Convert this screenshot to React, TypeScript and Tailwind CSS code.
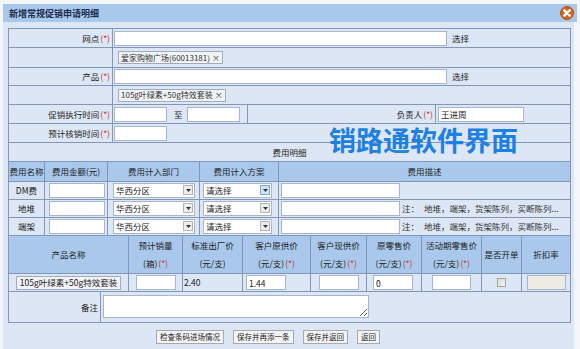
import React from 'react'

// shared cell border
const cell = 'border border-[#8296ba] p-0'
const head = 'border border-[#8296ba] p-0 bg-[#a9c8ec] font-normal'

function Req() {
  return <span className="text-[#c8342c] ml-[1px]">(*)</span>
}

function Box({ w, value = '', disabled = false }: { w: string; value?: string; disabled?: boolean }) {
  return (
    <input
      readOnly
      value={value}
      className={`${w} h-[15px] border border-[#a7b6cd] px-[2px] text-[8.5px] outline-none ${disabled ? 'bg-[#ecebe4]' : 'bg-white'}`}
    />
  )
}

function Tag({ text }: { text: string }) {
  return (
    <span className="inline-flex items-center h-[13px] px-[2px] border border-[#9eabc0] bg-[#f1f3f6] text-[#333] text-[8px]">
      {text}
      <span className="ml-[2px]">×</span>
    </span>
  )
}

function Select({ w, value, hot = false }: { w: string; value: string; hot?: boolean }) {
  return (
    <div className={`${w} h-[15px] flex items-center justify-between bg-white border border-[#a7b6cd] pl-[2px] pr-[1px]`}>
      <span>{value}</span>
      <span
        className={`w-[10px] h-[10px] flex items-center justify-center border ${
          hot ? 'border-[#7fa6d6] bg-[#cfe3f8]' : 'border-[#b5b5b5] bg-[#ededed]'
        }`}
      >
        <svg width="5" height="3" viewBox="0 0 5 3">
          <path d="M0 0h5L2.5 3z" fill="#333" />
        </svg>
      </span>
    </div>
  )
}

function Btn({ label }: { label: string }) {
  return (
    <button
      type="button"
      className="h-[14px] px-[3px] border border-[#a4a9b3] bg-[#f4f4f4] text-[7.5px] text-[#222] leading-none"
    >
      {label}
    </button>
  )
}

const costRows = [
  { name: 'DM费', hot: true, note: false },
  { name: '地堆', hot: false, note: true },
  { name: '端架', hot: false, note: true },
]

const productHeads: [string, string | null, boolean][] = [
  ['产品名称', null, false],
  ['预计销量', '(箱)', true],
  ['标准出厂价', '(元/支)', false],
  ['客户原供价', '(元/支)', true],
  ['客户现供价', '(元/支)', true],
  ['原零售价', '(元/支)', true],
  ['活动期零售价', '(元/支)', true],
  ['是否开单', null, false],
  ['折扣率', null, false],
]

export default function App() {
  return (
    <div className="w-[580px] h-[349px] overflow-hidden bg-[#f3f6fb] font-['Noto_Sans_CJK_SC',sans-serif] text-[8.5px] text-[#222] leading-none">
      <div className="relative ml-[3px] mt-[4px] w-[571px] h-[345px] bg-[#dde6f4]">
        {/* title bar */}
        <div className="flex items-center justify-between h-[18px] w-[574px] bg-[#a9c9ec] pl-[6px] pr-[3px]">
          <span className="font-bold text-[9px] text-[#1b2b4d]">新增常规促销申请明细</span>
          <svg width="14" height="14" viewBox="0 0 14 14">
            <circle cx="7" cy="7" r="6.5" fill="#d8651f" stroke="#b14c12" />
            <path d="M4.3 4.3l5.4 5.4M9.7 4.3l-5.4 5.4" stroke="#fff" strokeWidth="2.4" strokeLinecap="round" />
          </svg>
        </div>

        <div className="pl-[5px] pt-[6px]">
          {/* header form */}
          <table className="table-fixed border-collapse w-[562px]">
            <colgroup>
              <col className="w-[104px]" />
              <col className="w-[135px]" />
              <col className="w-[188px]" />
              <col className="w-[135px]" />
            </colgroup>
            <tbody>
              <tr className="h-[19px]">
                <td className={`${cell} text-right pr-[2px]`}>网点<Req /></td>
                <td className={cell} colSpan={3}>
                  <div className="flex items-center">
                    <span className="ml-[1px]"><Box w="w-[333px]" /></span>
                    <span className="ml-[5px]">选择</span>
                  </div>
                </td>
              </tr>
              <tr className="h-[20px]">
                <td className={cell} />
                <td className={`${cell} pl-[5px]`} colSpan={3}><Tag text="爱家购物广场(60013181)" /></td>
              </tr>
              <tr className="h-[18px]">
                <td className={`${cell} text-right pr-[2px]`}>产品<Req /></td>
                <td className={cell} colSpan={3}>
                  <div className="flex items-center">
                    <span className="ml-[1px]"><Box w="w-[333px]" /></span>
                    <span className="ml-[5px]">选择</span>
                  </div>
                </td>
              </tr>
              <tr className="h-[19px]">
                <td className={cell} />
                <td className={`${cell} pl-[5px]`} colSpan={3}><Tag text="105g叶绿素+50g特效套装" /></td>
              </tr>
              <tr className="h-[19px]">
                <td className={`${cell} text-right pr-[2px]`}>促销执行时间<Req /></td>
                <td className={cell}>
                  <div className="flex items-center">
                    <span className="ml-[1px]"><Box w="w-[53px]" /></span>
                    <span className="ml-[7px] mr-[4px]">至</span>
                    <Box w="w-[53px]" />
                  </div>
                </td>
                <td className={`${cell} text-right pr-[2px]`}>负责人<Req /></td>
                <td className={cell}>
                  <span className="ml-[2px]"><Box w="w-[86px]" value="王进周" /></span>
                </td>
              </tr>
              <tr className="h-[19px]">
                <td className={`${cell} text-right pr-[2px]`}>预计核销时间<Req /></td>
                <td className={cell} colSpan={3}>
                  <span className="ml-[1px]"><Box w="w-[53px]" /></span>
                </td>
              </tr>
              <tr className="h-[19px]">
                <td className={`${cell} text-center`} colSpan={4}>费用明细</td>
              </tr>
            </tbody>
          </table>

          {/* cost table */}
          <table className="table-fixed border-collapse w-[562px]">
            <colgroup>
              <col className="w-[36px]" />
              <col className="w-[63px]" />
              <col className="w-[92px]" />
              <col className="w-[79px]" />
              <col className="w-[292px]" />
            </colgroup>
            <tbody>
              <tr className="h-[19px]">
                <th className={`${head} border-t-0`}>费用名称</th>
                <th className={`${head} border-t-0`}>费用金额(元)</th>
                <th className={`${head} border-t-0`}>费用计入部门</th>
                <th className={`${head} border-t-0`}>费用计入方案</th>
                <th className={`${head} border-t-0`}>费用描述</th>
              </tr>
              {costRows.map((r) => (
                <tr key={r.name} className="h-[18px]">
                  <td className={`${cell} text-center`}>{r.name}</td>
                  <td className={cell}>
                    <span className="ml-[4px]"><Box w="w-[56px]" /></span>
                  </td>
                  <td className={cell}>
                    <div className="ml-[5px]"><Select w="w-[82px]" value="华西分区" /></div>
                  </td>
                  <td className={cell}>
                    <div className="ml-[3px]"><Select w="w-[69px]" value="请选择" hot={r.hot} /></div>
                  </td>
                  <td className={cell}>
                    <div className="flex items-center ml-[2px]">
                      <Box w="w-[119px]" />
                      {r.note && (
                        <span className="ml-[2px] text-[#333]">
                          注：<span className="ml-[5px]">地堆，端架，货架陈列，买断陈列...</span>
                        </span>
                      )}
                    </div>
                  </td>
                </tr>
              ))}
            </tbody>
          </table>

          {/* product table */}
          <table className="table-fixed border-collapse w-[562px]">
            <colgroup>
              <col className="w-[120px]" />
              <col className="w-[54px]" />
              <col className="w-[60px]" />
              <col className="w-[68px]" />
              <col className="w-[56px]" />
              <col className="w-[55px]" />
              <col className="w-[60px]" />
              <col className="w-[40px]" />
              <col className="w-[49px]" />
            </colgroup>
            <tbody>
              <tr className="h-[38px]">
                {productHeads.map(([a, b, req]) => (
                  <th key={a} className={`${head} border-t-0 text-center`}>
                    <div>{a}</div>
                    {b && (
                      <div className="mt-[10px]">
                        {b}
                        {req && <Req />}
                      </div>
                    )}
                  </th>
                ))}
              </tr>
              <tr className="h-[18px]">
                <td className={`${cell} text-center`}>
                  <span className="inline-flex items-center h-[14px] px-[3px] border border-[#9eabc0] bg-[#f1f3f6]">
                    105g叶绿素+50g特效套装
                  </span>
                </td>
                <td className={`${cell} text-center`}><Box w="w-[40px]" /></td>
                <td className={`${cell} pl-[1px]`}>2.40</td>
                <td className={cell}><span className="ml-[3px]"><Box w="w-[40px]" value="1.44" /></span></td>
                <td className={`${cell} text-center`}><Box w="w-[40px]" /></td>
                <td className={cell}><span className="ml-[6px]"><Box w="w-[40px]" value="0" /></span></td>
                <td className={`${cell} text-center`}><Box w="w-[39px]" /></td>
                <td className={cell}>
                  <div className="mx-auto w-[9px] h-[9px] border border-[#a3a3a3] bg-gradient-to-br from-[#d8d8d8] to-[#f4f4f4]" />
                </td>
                <td className={`${cell} text-center`}><Box w="w-[39px]" disabled /></td>
              </tr>
            </tbody>
          </table>

          {/* remark */}
          <table className="table-fixed border-collapse w-[562px]">
            <colgroup>
              <col className="w-[92px]" />
              <col className="w-[470px]" />
            </colgroup>
            <tbody>
              <tr className="h-[30px]">
                <td className={`${cell} border-t-0 text-right pr-[2px]`}>备注</td>
                <td className={`${cell} border-t-0`}>
                  <textarea
                    readOnly
                    className="block ml-[2px] w-[266px] h-[23px] resize border border-[#a7b6cd] bg-white outline-none"
                  />
                </td>
              </tr>
            </tbody>
          </table>
        </div>

        {/* actions */}
        <div className="flex items-center gap-[9px] pl-[153px] mt-[7px]">
          <Btn label="检查条码进场情况" />
          <Btn label="保存并再添一条" />
          <Btn label="保存并返回" />
          <Btn label="返回" />
        </div>

        {/* overlay watermark */}
        <div className="absolute left-[326px] top-[122px] text-[27px] font-bold text-[#1d80e2] leading-none pointer-events-none">
          销路通软件界面
        </div>
      </div>
    </div>
  )
}
